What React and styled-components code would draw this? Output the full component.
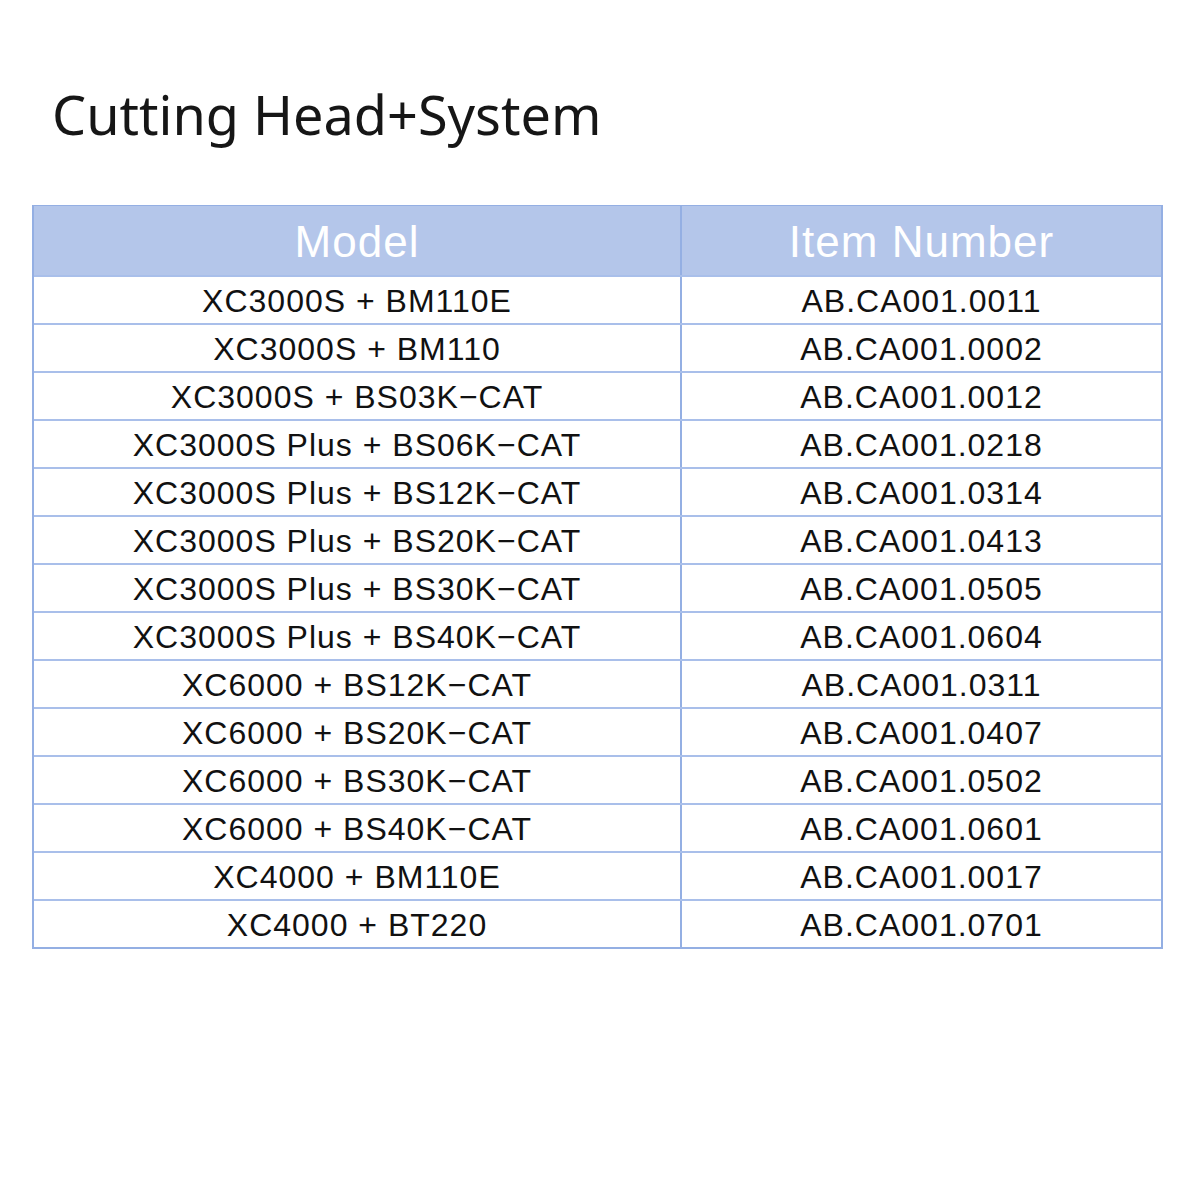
import React from "react";
import styled, { createGlobalStyle } from "styled-components";

const rows = [
  ["XC3000S + BM110E", "AB.CA001.0011"],
  ["XC3000S + BM110", "AB.CA001.0002"],
  ["XC3000S + BS03K\u2212CAT", "AB.CA001.0012"],
  ["XC3000S Plus + BS06K\u2212CAT", "AB.CA001.0218"],
  ["XC3000S Plus + BS12K\u2212CAT", "AB.CA001.0314"],
  ["XC3000S Plus + BS20K\u2212CAT", "AB.CA001.0413"],
  ["XC3000S Plus + BS30K\u2212CAT", "AB.CA001.0505"],
  ["XC3000S Plus + BS40K\u2212CAT", "AB.CA001.0604"],
  ["XC6000 + BS12K\u2212CAT", "AB.CA001.0311"],
  ["XC6000 + BS20K\u2212CAT", "AB.CA001.0407"],
  ["XC6000 + BS30K\u2212CAT", "AB.CA001.0502"],
  ["XC6000 + BS40K\u2212CAT", "AB.CA001.0601"],
  ["XC4000 + BM110E", "AB.CA001.0017"],
  ["XC4000 + BT220", "AB.CA001.0701"],
];

const App = () => {
  return (
    <Page>
      <GlobalStyle />
      <Title>Cutting Head+System</Title>
      <Table>
        <Row header>
          <HeadCell>Model</HeadCell>
          <HeadCell>Item Number</HeadCell>
        </Row>
        {rows.map(([model, item]) => (
          <Row key={item}>
            <Cell>{model}</Cell>
            <Cell>{item}</Cell>
          </Row>
        ))}
      </Table>
    </Page>
  );
};

const GlobalStyle = createGlobalStyle`
  body {
    margin: 0;
    background: #fff;
  }
`;

const Page = styled.div`
  width: 1200px;
  height: 1200px;
  padding: 82px 37px 0 32px;
  box-sizing: border-box;
  background: #fff;
`;

const Title = styled.h1`
  margin: 0 0 0 20px;
  font-family: "Noto Sans", sans-serif;
  font-weight: 400;
  font-size: 54px;
  line-height: 64px;
  color: #161616;
  height: 123px;
`;

const Table = styled.div`
  border: 2px solid #94afe3;
  border-top-width: 1px;
  width: 1131px;
  box-sizing: border-box;
`;

const Row = styled.div`
  display: grid;
  grid-template-columns: 646px 1fr;
  height: ${(p) => (p.header ? "69px" : "48px")};
  background: ${(p) => (p.header ? "#b4c6ea" : "#fff")};
  border-top: ${(p) => (p.header ? "none" : "2px solid #a9bfea")};
  box-sizing: border-box;
`;

const Cell = styled.div`
  display: flex;
  align-items: center;
  justify-content: center;
  font-family: "Liberation Sans", Arial, sans-serif;
  font-size: 32px;
  letter-spacing: 1px;
  color: #111;
  padding-top: 2px;
  & + & {
    border-left: 2px solid #94afe3;
  }
`;

const HeadCell = styled(Cell)`
  color: #fff;
  font-size: 44px;
  letter-spacing: 1px;
  padding-top: 2px;
`;

export default App;
